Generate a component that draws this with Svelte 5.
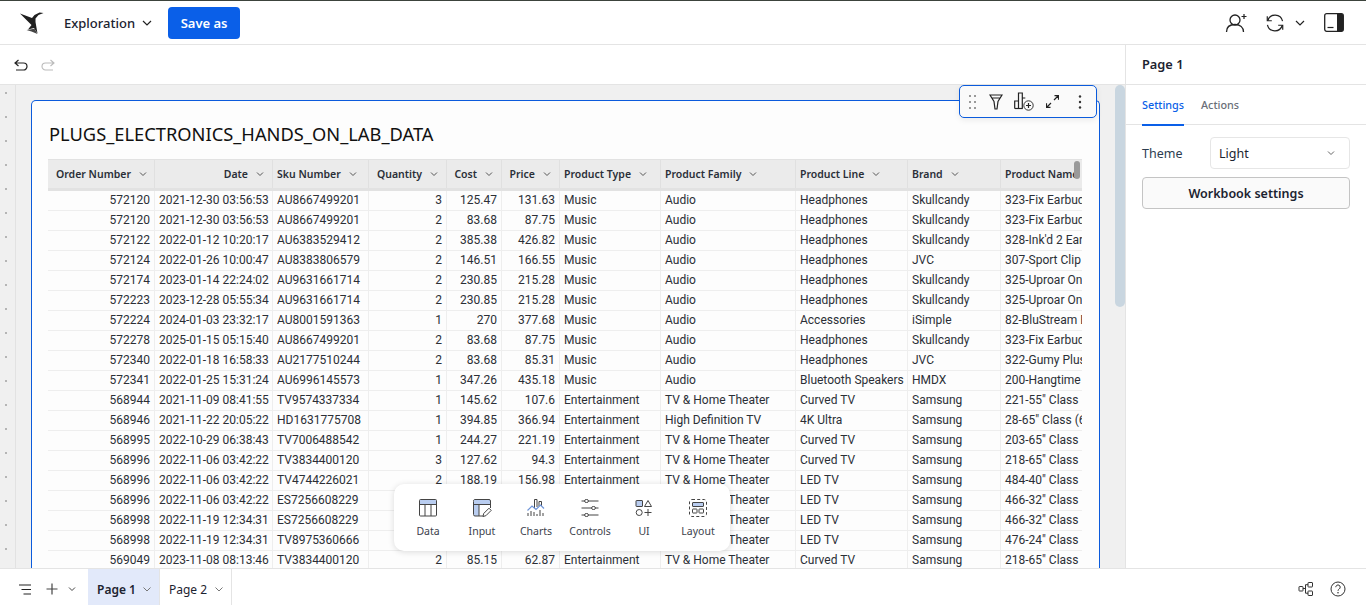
<script>
  const cols = [
    { name: 'Order Number', cls: 'hl' , num: true },
    { name: 'Date', cls: 'hr', num: true },
    { name: 'Sku Number', cls: 'hl2' },
    { name: 'Quantity', cls: 'hr', num: true },
    { name: 'Cost', cls: 'hr', num: true },
    { name: 'Price', cls: 'hr', num: true },
    { name: 'Product Type', cls: 'hl2' },
    { name: 'Product Family', cls: 'hl2' },
    { name: 'Product Line', cls: 'hl2' },
    { name: 'Brand', cls: 'hl2' },
    { name: 'Product Name', cls: 'hl2', nochev: true }
  ];
  const M = ['Music', 'Audio'];
  const E = ['Entertainment', 'TV & Home Theater'];
  const rows = [
    ['572120','2021-12-30 03:56:53','AU8667499201','3','125.47','131.63',...M,'Headphones','Skullcandy','323-Fix Earbuds'],
    ['572120','2021-12-30 03:56:53','AU8667499201','2','83.68','87.75',...M,'Headphones','Skullcandy','323-Fix Earbuds'],
    ['572122','2022-01-12 10:20:17','AU6383529412','2','385.38','426.82',...M,'Headphones','Skullcandy',"328-Ink'd 2 Earbuds"],
    ['572124','2022-01-26 10:00:47','AU8383806579','2','146.51','166.55',...M,'Headphones','JVC','307-Sport Clip'],
    ['572174','2023-01-14 22:24:02','AU9631661714','2','230.85','215.28',...M,'Headphones','Skullcandy','325-Uproar On-Ear'],
    ['572223','2023-12-28 05:55:34','AU9631661714','2','230.85','215.28',...M,'Headphones','Skullcandy','325-Uproar On-Ear'],
    ['572224','2024-01-03 23:32:17','AU8001591363','1','270','377.68',...M,'Accessories','iSimple','82-BluStream Bluetooth'],
    ['572278','2025-01-15 05:15:40','AU8667499201','2','83.68','87.75',...M,'Headphones','Skullcandy','323-Fix Earbuds'],
    ['572340','2022-01-18 16:58:33','AU2177510244','2','83.68','85.31',...M,'Headphones','JVC','322-Gumy Plus'],
    ['572341','2022-01-25 15:31:24','AU6996145573','1','347.26','435.18',...M,'Bluetooth Speakers','HMDX','200-Hangtime'],
    ['568944','2021-11-09 08:41:55','TV9574337334','1','145.62','107.6',...E,'Curved TV','Samsung','221-55" Class'],
    ['568946','2021-11-22 20:05:22','HD1631775708','1','394.85','366.94','Entertainment','High Definition TV','4K Ultra','Samsung','28-65" Class (6'],
    ['568995','2022-10-29 06:38:43','TV7006488542','1','244.27','221.19',...E,'Curved TV','Samsung','203-65" Class'],
    ['568996','2022-11-06 03:42:22','TV3834400120','3','127.62','94.3',...E,'Curved TV','Samsung','218-65" Class'],
    ['568996','2022-11-06 03:42:22','TV4744226021','2','188.19','156.98',...E,'LED TV','Samsung','484-40" Class'],
    ['568996','2022-11-06 03:42:22','ES7256608229','1','110.74','128.99',...E,'LED TV','Samsung','466-32" Class'],
    ['568998','2022-11-19 12:34:31','ES7256608229','1','110.74','128.99',...E,'LED TV','Samsung','466-32" Class'],
    ['568998','2022-11-19 12:34:31','TV8975360666','1','96.42','104.5',...E,'LED TV','Samsung','476-24" Class'],
    ['569049','2023-11-08 08:13:46','TV3834400120','2','85.15','62.87',...E,'Curved TV','Samsung','218-65" Class']
  ];
  const dots = Array.from({ length: 21 });
</script>

<div class="app">
  <header class="topbar">
    <svg class="logo" width="26" height="24" viewBox="0 0 26 24">
      <path d="M1 2.500 L13 7 L15.500 4 L20.500 1.500 L24.500 2 L19.500 4 L16.500 7.500 L16.500 11 L18.500 22.500 L15 17 L9 18.500 L12.500 14 Z" fill="#1f1f1f"/>
      <path d="M7.500 19 L15.500 17.800 L18.500 23 L12.500 20.500 Z" fill="#444"/>
    </svg>
    <button class="explore">Exploration
      <svg width="12" height="12" viewBox="0 0 12 12"><path d="M2 4l4 4 4-4" class="ln"/></svg>
    </button>
    <button class="save">Save as</button>
    <div class="spacer"></div>
    <svg class="u1" width="24" height="22" viewBox="0 0 24 22">
      <circle cx="10" cy="8" r="5" class="ln15"/>
      <path d="M1.500 20c0-5 3.500-7.500 8.500-7.500s8.500 2.500 8.500 7.500" class="ln15"/>
      <path d="M19 2v5M16.500 4.500h5" class="ln"/>
    </svg>
    <svg class="u2" width="20" height="22" viewBox="0 0 22 22">
      <path d="M2.500 3.500v5h5M19.500 18.500v-5h-5" class="ln15"/>
      <path d="M3 8.500A8.400 8.400 0 0 1 19.300 9M19 13.500A8.400 8.400 0 0 1 2.700 13" class="ln15"/>
    </svg>
    <svg class="u3" width="12" height="12" viewBox="0 0 12 12"><path d="M2 4l4 4 4-4" class="ln"/></svg>
    <svg class="u4" width="20" height="19" viewBox="0 0 20 19">
      <rect x=".7" y=".7" width="18.600" height="17.600" rx="2" fill="#fff" stroke="#222" stroke-width="1.300"/>
      <path d="M13 .7h4.300a2 2 0 0 1 2 2v13.600a2 2 0 0 1-2 2H13z" fill="#222"/>
      <path d="M3.500 14.500h6" class="ln"/>
    </svg>
  </header>

  <div class="workspace">
    <div class="main">
      <div class="history">
        <svg width="14" height="12" viewBox="0 0 14 12"><path d="M4.500 1L1 4l3.500 3M1.500 4h8a3.500 3.500 0 0 1 0 7H2" class="ln"/></svg>
        <svg width="14" height="12" viewBox="0 0 14 12"><path d="M9.500 1L13 4 9.500 7M12.500 4h-8a3.500 3.500 0 0 0 0 7H12" fill="none" stroke="#bbb" stroke-width="1.100"/></svg>
      </div>

      <div class="canvas">
        <div class="gutter">
          {#each dots as _}<i></i>{/each}
        </div>
        <div class="stage">
          <section class="card">
            <h1>PLUGS_ELECTRONICS_HANDS_ON_LAB_DATA</h1>
            <div class="table">
              <div class="row head">
                {#each cols as c}
                  <div class="th {c.cls}">
                    <span>{c.name}</span>
                    {#if !c.nochev}
                      <svg width="8" height="8" viewBox="0 0 8 8"><path d="M1 2.500l3 3 3-3" fill="none" stroke="#555" stroke-width="1"/></svg>
                    {/if}
                  </div>
                {/each}
              </div>
              {#each rows as r}
                <div class="row">
                  {#each r as v, i}
                    <div class="td" class:num={cols[i].num}>{v}</div>
                  {/each}
                </div>
              {/each}
              <div class="thumb"></div>
            </div>
          </section>
        </div>
        <div class="scroll"><div class="scrollthumb"></div></div>

        <div class="tools">
          <svg class="t-drag" width="7" height="14" viewBox="0 0 7 14" fill="#999">
            <rect x="0" y="0" width="2" height="2"/><rect x="5" y="0" width="2" height="2"/>
            <rect x="0" y="6" width="2" height="2"/><rect x="5" y="6" width="2" height="2"/>
            <rect x="0" y="12" width="2" height="2"/><rect x="5" y="12" width="2" height="2"/>
          </svg>
          <svg class="t-fun" width="14" height="16" viewBox="0 0 14 16"><path d="M1 1h12L9 7.500 8 15H6L5 7.500z M2.500 4h9" class="ln"/></svg>
          <svg class="t-chart" width="20" height="19" viewBox="0 0 20 19">
            <path d="M.7 16.500V9h3.800v7.500M4.500 16.500V1h3.800v15.500M8.300 16.500V6h3" class="ln"/>
            <path d="M.7 16.500h8" class="ln"/>
            <circle cx="14.500" cy="13.500" r="4.700" fill="#fafafa" stroke="#333"/>
            <path d="M14.500 11v5M12 13.500h5" class="ln"/>
          </svg>
          <svg class="t-exp" width="13" height="13" viewBox="0 0 13 13"><path d="M8 5l4.500-4.500M8.500.7h4v4M5 8L.5 12.500M.5 8.300v4h4" class="ln"/></svg>
          <svg class="t-more" width="4" height="14" viewBox="0 0 4 14" fill="#333"><circle cx="2" cy="1.500" r="1.200"/><circle cx="2" cy="7" r="1.200"/><circle cx="2" cy="12.500" r="1.200"/></svg>
        </div>

        <nav class="dock">
          <div class="dock-item">
            <svg width="20" height="20" viewBox="0 0 20 20">
              <path d="M2 1.500h16v4.500H2z" fill="#b9cdf0"/>
              <rect x="1.500" y="1.500" width="17" height="16.500" rx="1" class="ic"/>
              <path d="M1.500 6.500h17M7 6.500V18M13 6.500V18" class="ic"/>
            </svg>
            <span>Data</span>
          </div>
          <div class="dock-item">
            <svg width="20" height="20" viewBox="0 0 20 20">
              <path d="M2 6h5v12H3a1 1 0 0 1-1-1z" fill="#b9cdf0"/>
              <path d="M2 1.500h16v5H2z" fill="#b9cdf0"/>
              <path d="M11 18H3a1.500 1.500 0 0 1-1.500-1.500v-13A1.500 1.500 0 0 1 3 1.500h14A1.500 1.500 0 0 1 18.500 3v7M1.500 6.500h17M7 6.500V18" class="ic"/>
              <path d="M11 18.500l.7-3 5.300-5.300 2.200 2.200-5.300 5.300z" fill="#fff" stroke="#444" stroke-width="1"/>
            </svg>
            <span>Input</span>
          </div>
          <div class="dock-item">
            <svg width="20" height="20" viewBox="0 0 20 20">
              <path d="M2 18V15M5 18v-5M8 18v-4M11 18v-2M14 18v-6M17 18v-3M8.500 10V1.500h2.500V9M13 8V3.500h2.500V8" class="ic"/>
              <path d="M1.500 12.500L6 8l4 3.500L14.500 7l3.500 3.500" fill="none" stroke="#6f95d8" stroke-width="1.200"/>
            </svg>
            <span>Charts</span>
          </div>
          <div class="dock-item">
            <svg width="20" height="20" viewBox="0 0 20 20">
              <path d="M1.500 3h3M8.500 3h10M1.500 10h10M15.500 10h3M1.500 17h3M8.500 17h10" class="ic"/>
              <ellipse cx="6.500" cy="3" rx="2" ry="1.500" class="ic"/>
              <ellipse cx="13.500" cy="10" rx="2" ry="1.500" class="ic"/>
              <ellipse cx="6.500" cy="17" rx="2" ry="1.500" class="ic"/>
            </svg>
            <span>Controls</span>
          </div>
          <div class="dock-item">
            <svg width="20" height="20" viewBox="0 0 20 20">
              <rect x="2" y="2.500" width="6.500" height="6" rx=".5" fill="#b9cdf0" stroke="#444"/>
              <path d="M14 2.500l3.500 6h-7z" class="ic"/>
              <circle cx="5.200" cy="14.500" r="3" class="ic"/>
              <path d="M14 11v7M10.500 14.500h7" class="ic"/>
            </svg>
            <span>UI</span>
          </div>
          <div class="dock-item">
            <svg width="20" height="20" viewBox="0 0 20 20">
              <rect x="1.500" y="1.500" width="17" height="17" rx="2.500" fill="none" stroke="#444" stroke-dasharray="3 2.200"/>
              <rect x="4.500" y="4.500" width="11" height="4" rx=".5" fill="#b9cdf0" stroke="#444"/>
              <rect x="4.500" y="11" width="4.500" height="4" rx=".5" class="ic"/>
              <rect x="11" y="11" width="4.500" height="4" rx=".5" class="ic"/>
            </svg>
            <span>Layout</span>
          </div>
        </nav>
      </div>
    </div>

    <aside class="panel">
      <div class="panel-title">Page 1</div>
      <div class="tabs">
        <div class="tab active">Settings</div>
        <div class="tab">Actions</div>
      </div>
      <div class="panel-body">
        <div class="field">
          <span>Theme</span>
          <div class="select">Light
            <svg width="8" height="8" viewBox="0 0 8 8"><path d="M1 2.500l3 3 3-3" fill="none" stroke="#666" stroke-width="1"/></svg>
          </div>
        </div>
        <button class="wb">Workbook settings</button>
      </div>
    </aside>
  </div>

  <footer class="footer">
    <svg class="f1" width="14" height="11" viewBox="0 0 14 11"><path d="M1 1h12M3.500 5.500H13M5.500 10H13" class="ln"/></svg>
    <svg class="f2" width="12" height="12" viewBox="0 0 12 12"><path d="M6 .5v11M.5 6h11" fill="none" stroke="#444" stroke-width="1.200"/></svg>
    <svg class="f3" width="8" height="8" viewBox="0 0 8 8"><path d="M1 2.500l3 3 3-3" fill="none" stroke="#444" stroke-width="1"/></svg>
    <div class="page on"><b>Page 1</b><svg width="10" height="10" viewBox="0 0 10 10"><path d="M1.500 3.500l3.500 3.500 3.500-3.500" fill="none" stroke="#777"/></svg></div>
    <div class="page"><span>Page 2</span><svg width="10" height="10" viewBox="0 0 10 10"><path d="M1.500 3.500l3.500 3.500 3.500-3.500" fill="none" stroke="#777"/></svg></div>
    <div class="spacer"></div>
    <svg class="f4" width="16" height="16" viewBox="0 0 16 16">
      <rect x="1" y="5.500" width="4" height="4.500" rx=".5" class="ic2"/>
      <rect x="10" y="1.500" width="4.500" height="4.500" rx=".5" class="ic2"/>
      <rect x="10" y="10" width="4.500" height="4.500" rx=".5" class="ic2"/>
      <path d="M5 7.500h2.500M10 3.700H7.500v8.500H10" class="ic2"/>
    </svg>
    <svg class="f5" width="16" height="16" viewBox="0 0 16 16">
      <circle cx="8" cy="8" r="7" class="ic2"/>
      <path d="M5.800 6.200a2.200 2.200 0 1 1 3.400 1.800c-.8.500-1.200 1-1.200 1.800" class="ic2"/>
      <circle cx="8" cy="11.800" r=".8" fill="#333"/>
    </svg>
  </footer>
</div>

<style>
  :global(body) { margin: 0; overflow: hidden; background: #fff; }
  .app {
    width: 1366px; height: 605px; display: flex; flex-direction: column; overflow: hidden;
    font-family: "Noto Sans", "Open Sans", sans-serif; color: #1c2330; border-top: 1px solid #3c433c; box-sizing: border-box;
  }
  .ln { fill: none; stroke: #222; stroke-width: 1.2; }
  .ln15 { fill: none; stroke: #222; stroke-width: 1.3; }
  .ic { fill: none; stroke: #444; stroke-width: 1; }
  .ic2 { fill: none; stroke: #333; stroke-width: 1; }
  .spacer { flex: 1; }

  .topbar { height: 43px; flex: none; display: flex; align-items: center; border-bottom: 1px solid #e4e4e4; }
  .logo { margin-left: 19px; }
  .explore {
    margin-left: 19px; display: flex; align-items: center; gap: 6px; background: none; border: 0; padding: 0;
    font: 500 13px "Noto Sans", sans-serif; color: #1c2330;
  }
  .save {
    margin-left: 15px; width: 72px; height: 32px; border: 0; border-radius: 4px; background: #0a5fe8; color: #fff;
    font: 600 13px "Noto Sans", sans-serif; padding: 0;
  }
  .u2 { margin-left: 16px; }
  .u3 { margin-left: 9px; }
  .u4 { margin-left: 18px; margin-right: 22px; }

  .workspace { flex: 1; display: flex; min-height: 0; }
  .main { flex: 1; min-width: 0; display: flex; flex-direction: column; }
  .history { height: 39px; flex: none; display: flex; align-items: center; gap: 13px; padding-left: 14px; border-bottom: 1px solid #e4e4e4; }

  .canvas { flex: 1; min-height: 0; display: flex; position: relative; background: #f0f0f0; overflow: hidden; }
  .gutter { width: 16px; flex: none; border-right: 1px solid #e2e2e2; display: flex; flex-direction: column; align-items: center; gap: 22px; padding-top: 7px; box-sizing: border-box; margin-right: 15px; }
  .gutter i { width: 2px; height: 2px; flex: none; background: #b5b5b5; margin-right: 3px; }
  .stage { flex: 1; min-width: 0; padding: 15px 25px 0 0; }
  .card { height: 100%; background: #fdfdfd; border: 1px solid #0b5bdc; border-bottom: 0; border-radius: 5px 5px 0 0; box-sizing: border-box; padding: 0 17px 0 16px; overflow: hidden; }
  h1 { margin: 21px 0 13px 1px; font: 400 18.300px/24px "Noto Sans", sans-serif; color: #111; }

  .table { position: relative; height: 500px; overflow: hidden; border-top: 1px solid #e2e2e2; }
  .row { display: grid; grid-template-columns: 107px 118px 96px 78px 55px 58px 101px 135px 112px 93px 200px; height: 20px; box-sizing: border-box; border-bottom: 1px solid #eee; }
  .head { height: 31px; background: #ebebeb; border-bottom: 3px solid #e2e2e2; }
  .th { display: flex; align-items: center; gap: 8px; font: 600 10.500px "Noto Sans", sans-serif; color: #2a2f38; border-right: 1px solid #e0e0e0; white-space: nowrap; overflow: hidden; min-width: 0; }
  .hl { padding-left: 8px; }
  .hl2 { padding-left: 4px; }
  .hr { justify-content: flex-end; padding-right: 8px; }
  .td { font: 400 12px/19px Roboto, sans-serif; color: #2b2f36; padding: 0 4px; border-right: 1px solid #eee; white-space: nowrap; overflow: hidden; }
  .num { text-align: right; }
  .thumb { position: absolute; top: 1px; right: 2px; width: 6px; height: 18px; background: #9a9a9a; border-radius: 3px; }

  .scroll { position: absolute; right: 0; top: 0; bottom: 0; width: 10px; background: #f0f0f0; }
  .scrollthumb { width: 10px; height: 222px; background: #c9d6e0; border-radius: 5px; }

  .tools { position: absolute; left: 959px; top: 0; width: 138px; height: 33px; box-sizing: border-box; background: #fafafa; border: 1px solid #0b5bdc; border-radius: 5px; display: flex; align-items: center; padding-left: 9px; box-shadow: 0 2px 6px rgba(0,0,0,.08); }
  .tools svg { flex: none; }
  .t-fun { margin-left: 13px; }
  .t-chart { margin-left: 11px; }
  .t-exp { margin-left: 12px; }
  .t-more { margin-left: 19px; }

  .dock { position: absolute; left: 394px; top: 399px; width: 336px; height: 67px; box-sizing: border-box; background: #fff; border-radius: 10px; box-shadow: 0 1px 6px rgba(0,0,0,.14); display: flex; padding: 14px 7px 0; }
  .dock-item { flex: none; width: 54px; display: flex; flex-direction: column; align-items: center; gap: 6px; font: 400 10.500px/15px "Noto Sans", sans-serif; color: #3c424c; white-space: nowrap; }

  .panel { width: 240px; flex: none; border-left: 1px solid #e4e4e4; display: flex; flex-direction: column; }
  .panel-title { height: 38px; display: flex; align-items: center; padding: 0 0 1px 16px; font: 600 12.800px "Noto Sans", sans-serif; border-bottom: 1px solid #e4e4e4; }
  .tabs { height: 39px; display: flex; gap: 17px; padding-left: 16px; border-bottom: 1px solid #e4e4e4; }
  .tab { height: 39px; box-sizing: content-box; font: 500 10.800px/40px "Noto Sans", sans-serif; color: #6a6f78; }
  .active { color: #0a5fe8; border-bottom: 2px solid #0a5fe8; }
  .panel-body { padding: 12px 16px; display: flex; flex-direction: column; gap: 8px; }
  .field { display: flex; align-items: center; justify-content: space-between; font: 400 12.500px "Noto Sans", sans-serif; color: #2c3d4f; }
  .select { width: 140px; height: 32px; box-sizing: border-box; border: 1px solid #e6e6e6; border-radius: 4px; display: flex; align-items: center; justify-content: space-between; padding: 0 14px 0 8px; color: #1c2330; }
  .wb { height: 32px; background: #fafafa; border: 1px solid #c4c4c4; border-radius: 4px; font: 600 12.500px "Noto Sans", sans-serif; color: #1c2330; padding: 0; }

  .footer { height: 37px; flex: none; border-top: 1px solid #e4e4e4; box-sizing: border-box; display: flex; align-items: center; background: #fff; }
  .footer > svg { margin-top: 4px; }
  .f1 { margin-left: 18px; }
  .f2 { margin-left: 14px; }
  .f3 { margin-left: 10px; margin-right: 12px; }
  .page { height: 100%; box-sizing: border-box; display: flex; align-items: center; justify-content: space-between; padding: 4px 7px 0 9px; width: 72px; font: 400 12px "Noto Sans", sans-serif; border-right: 1px solid #e4e4e4; white-space: nowrap; }
  .page b { font-weight: 600; }
  .on { background: #e2e9fa; }
  .f4 { margin-right: 16px; }
  .f5 { margin-right: 20px; }
</style>
